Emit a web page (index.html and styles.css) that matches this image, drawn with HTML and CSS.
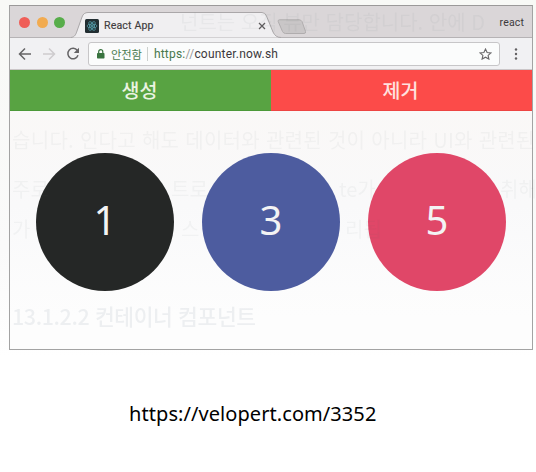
FILE: index.html
```html
<!DOCTYPE html>
<html lang="ko">
<head>
<meta charset="utf-8">
<title>React App</title>
<link rel="stylesheet" href="styles.css">
</head>
<body>
<figure class="page">
  <div class="paper">
    <div class="browser">
      <header class="tabs">
        <div class="lights"><i class="light red"></i><i class="light amber"></i><i class="light green"></i></div>
        <div class="tab">
          <svg class="tab-shape" width="212" height="26" viewBox="0 0 212 26"><path d="M0 25.5 C4 25 5 22 6 19 L11 5 Q12.500.5 17 .5 H191 Q194 .5 195.500 4 L202 20 Q204.500 25.500 210 25.500"/></svg>
          <div class="tab-content">
            <svg class="react" width="14" height="14" viewBox="0 0 14 14"><rect width="14" height="14" rx="1.500" fill="#222e32"/><g fill="none" stroke="#57a5b2" stroke-width=".7"><ellipse cx="7" cy="7" rx="5" ry="2"/><ellipse cx="7" cy="7" rx="5" ry="2" transform="rotate(60 7 7)"/><ellipse cx="7" cy="7" rx="5" ry="2" transform="rotate(120 7 7)"/></g><circle cx="7" cy="7" r="1" fill="#57a5b2"/></svg>
            <span class="tab-title">React App</span>
            <svg class="close" width="8" height="8" viewBox="0 0 8 8"><path d="M1 1 7 7M7 1 1 7"/></svg>
          </div>
        </div>
        <svg class="new-tab" width="30" height="16" viewBox="0 0 30 16"><path d="M2.500 .8H22Q24 .8 25 2.500L28.500 12.500Q29 14.500 27 14.500H8.500Q6.500 14.500 5.500 12.500L1.200 2.500Q.8 .8 2.500 .8Z"/></svg>
        <span class="profile">react</span>
      </header>
      <div class="toolbar">
        <svg class="nav" width="14" height="14" viewBox="0 0 14 14"><path d="M13 7H1.500M7 1.500 1.500 7 7 12.500"/></svg>
        <svg class="nav forward" width="14" height="14" viewBox="0 0 14 14"><path d="M1 7H12.500M7 1.500 12.500 7 7 12.500"/></svg>
        <svg class="nav reload" width="14" height="14" viewBox="0 0 14 14"><path d="M11.300 3.500A5.200 5.200 0 1 0 12 8.300"/><path class="tip" d="M13 .8V6H7.800Z"/></svg>
        <div class="address">
          <svg class="lock" width="8" height="10" viewBox="0 0 8 10"><rect y="4" width="7.500" height="5.500" rx=".7" fill="#38733f"/><path d="M1.700 4V2.700a2.050 2.050 0 0 1 4.100 0V4" fill="none" stroke="#38733f" stroke-width="1.200"/></svg>
          <span class="safe">안전함</span>
          <span class="url"><span class="scheme">https:</span><span class="slashes">//</span>counter.now.sh</span>
          <svg class="star" width="13" height="12" viewBox="0 0 13 12"><path d="M6.500 1 8.100 4.500 12 4.900 9.100 7.400 9.900 11.100 6.500 9.200 3.100 11.100 3.900 7.400 1 4.900 4.900 4.500Z"/></svg>
        </div>
        <svg class="more" width="4" height="14" viewBox="0 0 4 14"><circle cx="2" cy="2.500" r="1.200"/><circle cx="2" cy="7" r="1.200"/><circle cx="2" cy="11.500" r="1.200"/></svg>
      </div>
      <div class="actions"><div class="action create">생성</div><div class="action remove">제거</div></div>
      <main class="counters">
        <div class="counter black">1</div>
        <div class="counter blue">3</div>
        <div class="counter pink">5</div>
      </main>
    </div>
    <div class="ghosts" aria-hidden="true">
      <p class="ghost g1">넌트는 오직 뷰만 담당합니다. 안에 D</p>
      <p class="ghost g2">습니다. 인다고 해도 데이터와 관련된 것이 아니라 UI와 관련된</p>
      <p class="ghost g3">주로</p><p class="ghost g3b">트로</p><p class="ghost g3c">te가</p><p class="ghost g3d">취해</p>
      <p class="ghost g4">가</p><p class="ghost g4b">스</p><p class="ghost g4c">리됩</p>
      <p class="ghost heading">13.1.2.2 컨테이너 컴포넌트</p>
    </div>
  </div>
  <figcaption class="source">https://velopert.com/3352</figcaption>
</figure>
</body>
</html>
```
FILE: styles.css
```css
* { box-sizing: border-box; }
body { margin: 0; background: #fff; font-family: Roboto, "Noto Sans CJK KR", sans-serif; overflow: hidden; }
svg { display: block; flex: none; }
.page { margin: 0; width: 536px; height: 472px; }
.paper { position: relative; height: 357px; padding: 5px 3px 0 9px; background: linear-gradient(#f8f9f6, #fafafa 70%, #fff); }
.browser { width: 524px; height: 345px; border: 1px solid #a3a3a3; border-top-color: #9b9999; background: linear-gradient(#faf8f7 105px, #f9f9fa 200px, #fdfdfd 310px); }
.tabs { display: flex; align-items: flex-start; height: 32px; padding-left: 9px; background: #dad6d8; border-bottom: 1px solid #b6b3b5; }
.lights { display: flex; gap: 6.5px; margin-top: 11px; }
.light { width: 11px; height: 11px; border-radius: 50%; }
.red { background: #ef5e58; }
.amber { background: #f2ab50; }
.green { background: #57ad4a; }
.tab { position: relative; width: 212px; height: 26px; margin: 6px 0 -1px 6px; }
.tab-shape { position: absolute; inset: 0; fill: #f0eff1; stroke: #aaa7a9; }
.tab-content { position: relative; display: flex; align-items: center; height: 26px; padding: 1px 17px 0 14px; }
.tab-title { margin-left: 5px; color: #413d40; font-size: 10.6px; line-height: 14px; letter-spacing: .15px; -webkit-text-stroke: .15px; }
.close { margin-left: auto; fill: none; stroke: #5e5c5e; stroke-width: 1.3; }
.new-tab { margin: 13px 0 0 -6px; fill: #c9c6c7; stroke: #b0adae; }
.profile { margin: 10px 8px 0 auto; color: #3d3a3c; font-size: 10.5px; line-height: 14px; letter-spacing: .15px; }
.toolbar { display: flex; align-items: center; height: 32px; padding: 0 14px 0 8px; background: #f1f1f3; border-bottom: 1px solid #cbc6c8; }
.nav { fill: none; stroke: #656466; stroke-width: 1.5; }
.forward { margin-left: 10px; stroke: #ceccce; }
.reload { margin-left: 10px; }
.tip { fill: #656466; stroke: none; }
.address { display: flex; align-items: center; width: 412px; height: 24px; margin-left: 8px; padding: 0 7px 0 8px; border: 1px solid #c7c6c8; border-radius: 3px; background: #fbfcfc; }
.safe { margin-left: 6px; padding-right: 5px; border-right: 1px solid #ccd0cd; color: #4a7b50; font: 11.3px/14px "Noto Sans CJK KR", sans-serif; letter-spacing: -.1px; }
.url { margin: 1px 0 0 6px; color: #3b383b; font-size: 12px; line-height: 15px; letter-spacing: .2px; }
.scheme { color: #47784c; }
.slashes { color: #999; }
.star { margin-left: auto; fill: none; stroke: #6a686a; stroke-width: 1.1; }
.more { margin-left: auto; fill: #626062; }
.actions { display: flex; height: 41px; }
.action { color: #eaf3e1; font: 500 19.5px/39px "Noto Sans CJK KR", sans-serif; text-align: center; }
.create { width: 261px; padding-right: 2px; background: #58a342; border-bottom: 1px solid #4c9939; }
.remove { flex: 1; padding-right: 2px; background: #fc4b49; color: #ffe1df; border-bottom: 1px solid #ed4442; }
.counters { display: flex; gap: 28px; padding: 42px 0 0 26px; }
.counter { width: 138px; height: 138px; border-radius: 50%; color: #f3f3f4; font: 40px/134px "Noto Sans", sans-serif; text-align: center; }
.black { background: #252726; }
.blue { background: #4d5c9f; }
.pink { background: #e04768; }
.ghosts { position: absolute; inset: 0; overflow: hidden; pointer-events: none; }
.ghost { position: absolute; margin: 0; color: rgba(80, 90, 105, .05); font: 20px/24px "Noto Sans CJK KR", sans-serif; white-space: nowrap; filter: blur(.7px); }
.g1 { left: 180px; top: 10px; }
.g2 { left: 12px; top: 128px; letter-spacing: .3px; }
.g3 { left: 12px; top: 177px; }
.g3b { left: 171px; top: 177px; }
.g3c { left: 339px; top: 177px; }
.g3d { left: 500px; top: 177px; }
.g4 { left: 12px; top: 217px; }
.g4b { left: 181px; top: 217px; }
.g4c { left: 345px; top: 217px; }
.heading { left: 12px; top: 304px; color: rgba(80, 100, 120, .09); font-size: 21.5px; font-weight: 500; letter-spacing: -.4px; }
.source { padding: 43px 0 0 129px; color: #000; font: 20px/28px "Noto Sans", sans-serif; letter-spacing: .07px; }
```
